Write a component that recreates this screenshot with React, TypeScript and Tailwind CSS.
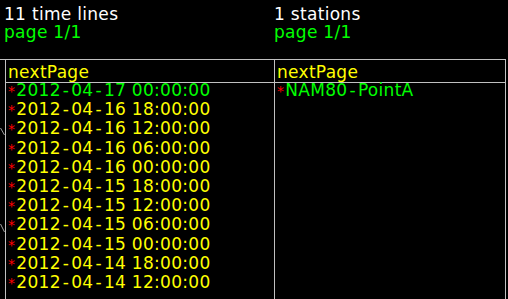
import React from "react";

const dates = [
  "2012-04-16 18:00:00",
  "2012-04-16 12:00:00",
  "2012-04-16 06:00:00",
  "2012-04-16 00:00:00",
  "2012-04-15 18:00:00",
  "2012-04-15 12:00:00",
  "2012-04-15 06:00:00",
  "2012-04-15 00:00:00",
  "2012-04-14 18:00:00",
  "2012-04-14 12:00:00",
];

function Wide({ text }: { text: string }) {
  const parts = text.split("-");
  return (
    <>
      {parts.map((p, i) => (
        <React.Fragment key={i}>
          {i > 0 && <span className="mx-[2px]">-</span>}
          {p}
        </React.Fragment>
      ))}
    </>
  );
}

function Row({ text, color }: { text: string; color: string }) {
  return (
    <div className={`h-[19.2px] whitespace-nowrap ${color}`}>
      <span className="text-[#ff0000] text-[14px] leading-[10px] mr-[1px]">*</span>
      <Wide text={text} />
    </div>
  );
}

export default function App() {
  return (
    <div
      className="relative w-[508px] h-[299px] overflow-hidden bg-black text-[17px] tracking-[0.3px]"
      style={{ fontFamily: '"DejaVu Sans", sans-serif' }}
    >
      <div className="flex h-[59px] pt-[5px] leading-[18px]">
        <div className="w-[274px] pl-[4px]">
          <div className="text-white">11 time lines</div>
          <div className="text-[#00ff00]">page 1/1</div>
        </div>
        <div>
          <div className="text-white">1 stations</div>
          <div className="text-[#00ff00]">page 1/1</div>
        </div>
      </div>
      <div className="w-[506px] border-t border-[#c0c0c0]">
        <div className="ml-[5px] flex h-[23px] border-x border-b border-[#c0c0c0] leading-[20px] text-[#ffff00]">
          <div className="w-[269px] pl-[2px] pt-[2px] border-r border-[#c0c0c0]">nextPage</div>
          <div className="pl-[2px] pt-[2px]">nextPage</div>
        </div>
        <div className="ml-[5px] flex h-[240px] border-x border-[#c0c0c0] leading-[19.2px]">
          <div className="w-[269px] pl-[2px] border-r border-[#c0c0c0]">
            <div className="-mt-[2px]">
              <Row text="2012-04-17 00:00:00" color="text-[#00ff00]" />
              {dates.map((d) => (
                <Row key={d} text={d} color="text-[#ffff00]" />
              ))}
            </div>
          </div>
          <div className="pl-[2px]">
            <div className="-mt-[2px]">
              <Row text="NAM80-PointA" color="text-[#00ff00]" />
            </div>
          </div>
        </div>
      </div>
      <svg className="absolute left-0 top-[127px]" width="6" height="9">
        <line x1="0.5" y1="1" x2="4.5" y2="8" stroke="#a0a0a0" strokeWidth="1" />
      </svg>
      <svg className="absolute left-0 top-[223px]" width="6" height="10">
        <line x1="0.5" y1="1" x2="4.5" y2="9" stroke="#a0a0a0" strokeWidth="1" />
      </svg>
    </div>
  );
}
